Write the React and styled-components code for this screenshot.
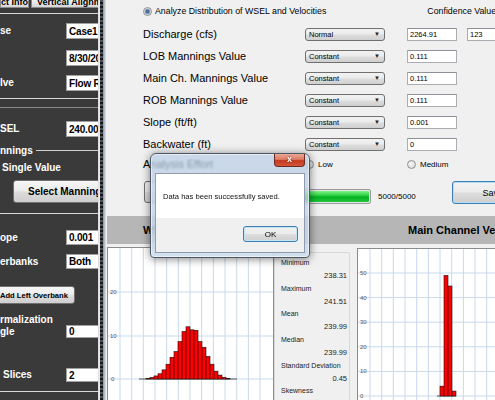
import React from "react";
import styled, { createGlobalStyle } from "styled-components";

const Global = createGlobalStyle`
  html, body { margin: 0; padding: 0; width: 495px; height: 400px; overflow: hidden; background: #f0f0f0; }
  #root { width: 495px; height: 400px; }
  * { box-sizing: border-box; }
`;

const Window = styled.div`
  display: flex;
  width: 495px;
  height: 400px;
  overflow: hidden;
  font-family: "Liberation Sans", Arial, sans-serif;
`;

/* ---------- left (dark) panel ---------- */
const LeftPanel = styled.div`
  width: 98px;
  flex: none;
  background: #3a3a3a;
  overflow: hidden;
  display: flex;
  flex-direction: column;
  color: #fff;
  font-weight: bold;
  font-size: 10px;
`;

const TabBar = styled.div`
  height: 8px;
  flex: none;
  display: flex;
  gap: 2px;
  overflow: hidden;
`;

const Tab = styled.div`
  flex: none;
  width: ${(p) => p.$w}px;
  height: 8px;
  padding-left: ${(p) => p.$pl || 0}px;
  background: linear-gradient(#f2f2f2, #d6d6d6);
  border: 1px solid #8a8a8a;
  border-top: none;
  color: #000;
  font-size: 9px;
  line-height: 5px;
  white-space: nowrap;
  overflow: hidden;
`;

const Rule = styled.div`
  flex: none;
  height: 1px;
  margin-top: ${(p) => p.$mt}px;
  background: ${(p) => p.$c || "#d8d8d8"};
`;

const FieldRow = styled.div`
  flex: none;
  display: flex;
  align-items: ${(p) => (p.$bottom ? "flex-end" : "center")};
  height: ${(p) => p.$h}px;
  margin-top: ${(p) => p.$mt}px;
`;

const FieldLabel = styled.div`
  width: 66px;
  flex: none;
  padding-left: ${(p) => p.$pl || 0}px;
  white-space: nowrap;
  line-height: 12px;
`;

const FieldInput = styled.div`
  width: 50px;
  flex: none;
  height: ${(p) => p.$h}px;
  background: #fff;
  border: 1px solid #a0a0a0;
  color: #000;
  padding-left: 2px;
  letter-spacing: -0.2px;
  display: flex;
  align-items: center;
  white-space: nowrap;
`;

const GroupTitle = styled.div`
  flex: none;
  display: flex;
  align-items: center;
  height: 12px;
  margin-top: ${(p) => p.$mt}px;
  &::after {
    content: "";
    flex: 1;
    height: 1px;
    margin-left: 3px;
    background: #cfcfcf;
  }
`;

const PlainLine = styled.div`
  flex: none;
  height: 12px;
  line-height: 12px;
  margin-top: ${(p) => p.$mt}px;
  padding-left: ${(p) => p.$pl || 0}px;
  white-space: nowrap;
`;

const PanelButton = styled.div`
  flex: none;
  margin-top: ${(p) => p.$mt}px;
  margin-left: ${(p) => p.$ml}px;
  width: ${(p) => p.$w}px;
  height: ${(p) => p.$h}px;
  padding-left: ${(p) => p.$pl}px;
  font-size: ${(p) => p.$fs}px;
  background: linear-gradient(#f6f6f6 0%, #ebebeb 48%, #dcdcdc 52%, #cfcfcf 100%);
  border: 1px solid #707070;
  border-radius: 3px;
  color: #000;
  display: flex;
  align-items: center;
  white-space: nowrap;
`;

const Splitter = styled.div`
  width: 8px;
  flex: none;
  background:
    repeating-linear-gradient(180deg, rgba(120, 130, 140, 0.55) 0 2px, transparent 2px 4px) 2px 0 / 3px 100% no-repeat,
    linear-gradient(to right, #d4d8dc 0, #eef0f2 2px, #1b1b1b 2px, #141414 5px, #8c97a3 5px, #c3cad2 7px, #e4e7ea 8px);
`;

/* ---------- right panel ---------- */
const RightPanel = styled.div`
  flex: 1;
  min-width: 0;
  position: relative;
  display: flex;
  flex-direction: column;
  background: #f0f0f0;
  overflow: hidden;
  color: #000;
`;

const TopRow = styled.div`
  flex: none;
  height: 12px;
  margin-top: 5px;
  padding-left: 37px;
  display: flex;
  align-items: center;
  font-size: 8.8px;
  white-space: nowrap;
`;

const Radio = styled.span`
  flex: none;
  width: 9px;
  height: 9px;
  border-radius: 50%;
  border: 1px solid #8e8f8f;
  margin-right: ${(p) => p.$mr || 3}px;
  background: ${(p) =>
    p.$on
      ? "radial-gradient(circle, #4f6f93 0 1.6px, #93acc6 2.4px, #e6ebf0 3.4px)"
      : "radial-gradient(circle at 40% 40%, #f7f7f7, #d2d2d2)"};
`;

const ConfidenceLabel = styled.span`
  margin-left: 101px;
`;

const ParamList = styled.div`
  flex: none;
  margin-top: 6px;
  display: flex;
  flex-direction: column;
`;

const ParamRow = styled.div`
  flex: none;
  height: 22px;
  padding-left: 37px;
  display: flex;
  align-items: center;
  white-space: nowrap;
`;

const ParamLabel = styled.div`
  width: 162px;
  flex: none;
  font-size: 11px;
`;

const Select = styled.div`
  width: 80px;
  height: 13px;
  flex: none;
  border: 1px solid #707070;
  border-radius: 3px;
  background: linear-gradient(#f3f3f3 0%, #ebebeb 48%, #dddddd 52%, #cfcfcf 100%);
  font-size: 7.5px;
  padding: 0 4px 0 3px;
  display: flex;
  align-items: center;
  justify-content: space-between;
`;

const Arrow = styled.span`
  font-size: 6px;
  color: #222;
`;

const TextBox = styled.div`
  width: ${(p) => p.$w || 50}px;
  height: 13px;
  flex: none;
  margin-left: ${(p) => p.$ml}px;
  background: #fff;
  border: 1px solid #abadb3;
  border-top-color: #8e9198;
  font-size: 7.5px;
  padding-left: 2px;
  display: flex;
  align-items: center;
`;

const EffortRow = styled.div`
  flex: none;
  height: 14px;
  margin-top: 2px;
  padding-left: 37px;
  display: flex;
  align-items: center;
  white-space: nowrap;
`;

const EffortOption = styled.div`
  width: ${(p) => p.$w}px;
  flex: none;
  display: flex;
  align-items: center;
  font-size: 8px;
`;

const ActionRow = styled.div`
  flex: none;
  height: 23px;
  margin-top: 10px;
  padding-left: 38px;
  display: flex;
  align-items: flex-start;
  white-space: nowrap;
`;

const RunButton = styled.div`
  width: 60px;
  height: 22px;
  flex: none;
  border: 1px solid #707070;
  border-radius: 3px;
  background: linear-gradient(#f3f3f3 0%, #ebebeb 48%, #dddddd 52%, #cfcfcf 100%);
`;

const Progress = styled.div`
  width: 159px;
  height: 15px;
  flex: none;
  margin: 8px 0 0 8px;
  border: 1px solid #9a9a9a;
  border-radius: 2px;
  background: #e6e6e6;
  padding: 1px;
`;

const ProgressFill = styled.div`
  height: 100%;
  border-radius: 1px;
  background: linear-gradient(#7ff38a 0%, #37d84a 35%, #06b025 55%, #1fc63b 100%);
`;

const Count = styled.span`
  margin: 11px 0 0 7px;
  font-size: 8px;
  line-height: 10px;
`;

const SaveButton = styled.div`
  width: 82px;
  height: 23px;
  flex: none;
  margin-left: 36px;
  border: 1px solid #3c7fb1;
  border-radius: 3px;
  box-shadow: inset 0 0 0 1px #b5dcf5;
  background: linear-gradient(#f2f2f2 0%, #ebebeb 48%, #dddddd 52%, #cfcfcf 100%);
  font-size: 9px;
  display: flex;
  align-items: center;
  justify-content: center;
`;

const HeaderBar = styled.div`
  flex: none;
  height: 28px;
  margin: 12px 0 0 1px;
  background: #b6b6b6;
  display: flex;
  align-items: center;
  font-weight: bold;
  font-size: 11px;
  white-space: nowrap;
`;

const HeaderCell = styled.div`
  flex: none;
  width: ${(p) => p.$w}px;
  padding-left: ${(p) => p.$pl}px;
`;

const ChartsRow = styled.div`
  flex: 1;
  min-height: 0;
  margin: 3px 0 0 1px;
  display: flex;
  align-items: flex-start;
`;

const ChartBox = styled.div`
  flex: none;
  width: ${(p) => p.$w}px;
  margin-left: ${(p) => p.$ml || 0}px;
  margin-top: ${(p) => p.$mt || 0}px;
  height: 160px;
  background: #fff;
  border: 1px solid #8c8c8c;
  overflow: hidden;
`;

const StatsPanel = styled.div`
  flex: none;
  width: 76px;
  height: 160px;
  margin-top: 5px;
  border: 1px solid #d9d9d9;
  border-radius: 2px;
  padding: 4px 2px 0 6px;
  display: flex;
  flex-direction: column;
  color: #222;
`;

const StatLabel = styled.div`
  height: 12px;
  line-height: 12px;
  font-size: 7px;
  white-space: nowrap;
`;

const StatValue = styled.div`
  height: 14px;
  line-height: 13px;
  font-size: 7.5px;
  text-align: right;
`;

/* ---------- message box ---------- */
const Dialog = styled.div`
  position: absolute;
  left: 44px;
  top: 153px;
  width: 160px;
  height: 105px;
  border: 1px solid #4b5764;
  border-radius: 6px 6px 4px 4px;
  background: linear-gradient(rgba(186, 206, 229, 0.72), rgba(204, 219, 236, 0.85));
  backdrop-filter: blur(1.3px);
  box-shadow: 0 1px 9px rgba(0, 0, 0, 0.5), inset 0 0 0 1px rgba(255, 255, 255, 0.55);
  padding: 0 4px 4px;
  display: flex;
  flex-direction: column;
`;

const TitleBar = styled.div`
  flex: none;
  height: 19px;
  display: flex;
  justify-content: flex-end;
  align-items: flex-start;
`;

const CloseButton = styled.div`
  width: 31px;
  height: 13px;
  border: 1px solid #6a2a1e;
  border-top: none;
  border-radius: 0 0 4px 4px;
  background: linear-gradient(#eba996 0%, #dd7a62 45%, #c4391f 55%, #d4573a 100%);
  color: #fff;
  font-size: 9px;
  font-weight: bold;
  line-height: 11px;
  text-align: center;
  text-shadow: 0 0 2px #5a1206;
`;

const DialogBody = styled.div`
  flex: 1;
  border: 1px solid #8e9cad;
  display: flex;
  flex-direction: column;
`;

const Message = styled.div`
  flex: none;
  height: 44px;
  background: #fff;
  padding-left: 7px;
  display: flex;
  align-items: center;
  font-size: 7.6px;
  color: #111;
  white-space: nowrap;
`;

const ButtonStrip = styled.div`
  flex: 1;
  background: #f0f0f0;
  display: flex;
  justify-content: flex-end;
  padding: 8px 6px 0 0;
`;

const OkButton = styled.div`
  width: 55px;
  height: 16px;
  border: 1px solid #3c7fb1;
  border-radius: 3px;
  box-shadow: inset 0 0 0 1px #c4e5f6;
  background: linear-gradient(#f2f2f2 0%, #ebebeb 48%, #dddddd 52%, #cfcfcf 100%);
  font-size: 8px;
  display: flex;
  align-items: center;
  justify-content: center;
`;

/* ---------- charts ---------- */
const GRID = "#c9d9ec";

function VGrid({ h }) {
  const xs = Array.from({ length: 13 }, (_, k) => 12 + k * 11.67);
  return xs.map((x, i) => <line key={i} x1={x} y1={0} x2={x} y2={h} stroke={GRID} strokeWidth="1" />);
}

const leftBars = [
  [146, 0.15], [150, 0.35], [154, 0.7], [158, 1.2], [162, 2.1], [166, 3.4],
  [170, 5.0], [174, 6.3], [178, 8.6], [182, 10.9], [186, 12.0], [190, 11.3],
  [194, 11.2], [198, 8.6], [202, 7.3], [206, 5.2], [210, 3.4], [214, 1.8],
  [218, 0.9], [222, 0.4], [226, 0.12],
];

function LeftChart() {
  const base = 131;
  const u = 4.35;
  return (
    <svg width="166" height="158" style={{ display: "block" }}>
      <VGrid h={158} />
      {[44, 88, 131].map((y) => (
        <line key={y} x1={0} y1={y} x2={166} y2={y} stroke={GRID} strokeWidth="1" />
      ))}
      {[["20", 44], ["10", 88], ["0", 131]].map(([t, y]) => (
        <text key={t} x={t === "0" ? 3 : 2} y={y + 2} fontSize="6" fill="#555" fontFamily="Liberation Sans, Arial, sans-serif">{t}</text>
      ))}
      <line x1={31} y1={base} x2={129} y2={base} stroke="#333" strokeWidth="0.8" />
      {leftBars.map(([x, v]) => (
        <rect key={x} x={x - 108} y={base - v * u} width={4} height={v * u} fill="#ff0000" stroke="#111" strokeWidth="0.6" />
      ))}
    </svg>
  );
}

const rightBars = [[440, 4], [444, 49], [448, 44.7], [452, 2]];

function RightChart() {
  const base = 147;
  const u = 2.46;
  const levels = [0, 10, 20, 30, 40, 50, 60];
  return (
    <svg width="140" height="158" style={{ display: "block" }}>
      <VGrid h={158} />
      {levels.map((v) => (
        <line key={v} x1={0} y1={base - v * u} x2={140} y2={base - v * u} stroke={GRID} strokeWidth="1" />
      ))}
      {levels.slice(0, 6).map((v) => (
        <text key={v} x={2} y={base - v * u + 2} fontSize="6" fill="#555" fontFamily="Liberation Sans, Arial, sans-serif">{v}</text>
      ))}
      <line x1={79} y1={base} x2={98} y2={base} stroke="#333" strokeWidth="0.8" />
      {rightBars.map(([x, v]) => (
        <rect key={x} x={x - 358} y={base - v * u} width={4} height={v * u} fill="#ff0000" stroke="#111" strokeWidth="0.6" />
      ))}
    </svg>
  );
}

const params = [
  { label: "Discharge (cfs)", mode: "Normal", value: "2264.91", extra: "123" },
  { label: "LOB Mannings Value", mode: "Constant", value: "0.111" },
  { label: "Main Ch. Mannings Value", mode: "Constant", value: "0.111" },
  { label: "ROB Mannings Value", mode: "Constant", value: "0.111" },
  { label: "Slope (ft/ft)", mode: "Constant", value: "0.001" },
  { label: "Backwater (ft)", mode: "Constant", value: "0" },
];

const stats = [
  ["Minimum", "238.31"],
  ["Maximum", "241.51"],
  ["Mean", "239.99"],
  ["Median", "239.99"],
  ["Standard Deviation", "0.45"],
  ["Skewness", ""],
];

export default function App() {
  return (
    <Window>
      <Global />
      <LeftPanel>
        <TabBar>
          <Tab $w={29}>ct Info</Tab>
          <Tab $w={70} $pl={5}>Vertical Alignment</Tab>
        </TabBar>
        <Rule $mt={5} />
        <FieldRow $h={16} $mt={9}>
          <FieldLabel>se</FieldLabel>
          <FieldInput $h={16}>Case1</FieldInput>
        </FieldRow>
        <FieldRow $h={16} $mt={11}>
          <FieldLabel />
          <FieldInput $h={16}>8/30/2016</FieldInput>
        </FieldRow>
        <FieldRow $h={16} $mt={9}>
          <FieldLabel>lve</FieldLabel>
          <FieldInput $h={16}>Flow Rate</FieldInput>
        </FieldRow>
        <Rule $mt={7} />
        <Rule $mt={8} $c="#8a8a8a" />
        <FieldRow $h={16} $mt={13}>
          <FieldLabel>SEL</FieldLabel>
          <FieldInput $h={16}>240.00</FieldInput>
        </FieldRow>
        <GroupTitle $mt={7}>nnings</GroupTitle>
        <PlainLine $mt={6} $pl={2}>Single Value</PlainLine>
        <PanelButton $mt={6} $ml={13} $w={110} $h={23} $pl={14} $fs={10}>Select Mannings</PanelButton>
        <Rule $mt={10} />
        <FieldRow $h={15} $mt={16}>
          <FieldLabel>ope</FieldLabel>
          <FieldInput $h={15}>0.001</FieldInput>
        </FieldRow>
        <FieldRow $h={15} $mt={9}>
          <FieldLabel>erbanks</FieldLabel>
          <FieldInput $h={15}>Both</FieldInput>
        </FieldRow>
        <PanelButton $mt={17} $ml={-3} $w={78} $h={18} $pl={2} $fs={7.6}>Add Left Overbank</PanelButton>
        <FieldRow $h={24} $mt={10} $bottom>
          <FieldLabel>rmalization<br />gle</FieldLabel>
          <FieldInput $h={13}>0</FieldInput>
        </FieldRow>
        <FieldRow $h={14} $mt={30}>
          <FieldLabel $pl={3}>Slices</FieldLabel>
          <FieldInput $h={14}>2</FieldInput>
        </FieldRow>
        <Rule $mt={9} />
      </LeftPanel>

      <Splitter />

      <RightPanel>
        <TopRow>
          <Radio $on />
          <span>Analyze Distribution of WSEL and Velocities</span>
          <ConfidenceLabel>Confidence Value</ConfidenceLabel>
        </TopRow>
        <ParamList>
          {params.map((p) => (
            <ParamRow key={p.label}>
              <ParamLabel>{p.label}</ParamLabel>
              <Select>
                <span>{p.mode}</span>
                <Arrow>▼</Arrow>
              </Select>
              <TextBox $ml={22}>{p.value}</TextBox>
              {p.extra && <TextBox $ml={10} $w={40}>{p.extra}</TextBox>}
            </ParamRow>
          ))}
        </ParamList>
        <EffortRow>
          <ParamLabel>Analysis Effort</ParamLabel>
          <EffortOption $w={102}>
            <Radio $mr={4} />
            Low
          </EffortOption>
          <EffortOption $w={80}>
            <Radio $mr={4} />
            Medium
          </EffortOption>
        </EffortRow>
        <ActionRow>
          <RunButton />
          <Progress>
            <ProgressFill />
          </Progress>
          <Count>5000/5000</Count>
          <SaveButton>Save</SaveButton>
        </ActionRow>
        <HeaderBar>
          <HeaderCell $w={250} $pl={36}>WSEL Distribution</HeaderCell>
          <HeaderCell $w={250} $pl={51}>Main Channel Velocity Distribution</HeaderCell>
        </HeaderBar>
        <ChartsRow>
          <ChartBox $w={167}>
            <LeftChart />
          </ChartBox>
          <StatsPanel>
            {stats.map(([l, v]) => (
              <React.Fragment key={l}>
                <StatLabel>{l}</StatLabel>
                <StatValue>{v}</StatValue>
              </React.Fragment>
            ))}
          </StatsPanel>
          <ChartBox $ml={7} $mt={1} $w={145}>
            <RightChart />
          </ChartBox>
        </ChartsRow>

        <Dialog>
          <TitleBar>
            <CloseButton>x</CloseButton>
          </TitleBar>
          <DialogBody>
            <Message>Data has been successfully saved.</Message>
            <ButtonStrip>
              <OkButton>OK</OkButton>
            </ButtonStrip>
          </DialogBody>
        </Dialog>
      </RightPanel>
    </Window>
  );
}
